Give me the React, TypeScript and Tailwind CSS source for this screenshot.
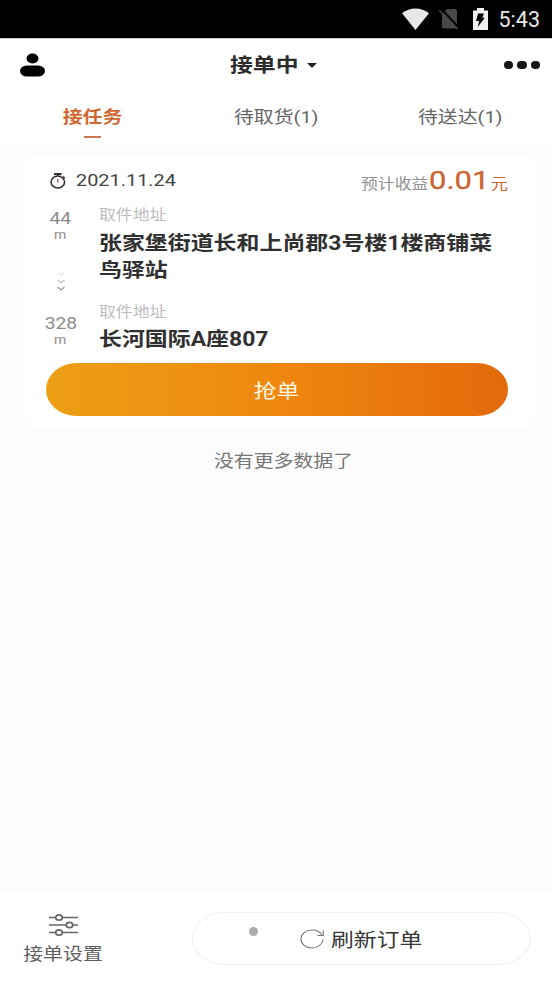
import clsx from "clsx";
import type { ReactNode } from "react";

const tabs = [
	{ label: "接任务", active: true },
	{ label: "待取货(1)", active: false },
	{ label: "待送达(1)", active: false }
];

// Wide text, stretched horizontally from its origin
function Wide({ className, children }: { className?: string, children: ReactNode }) {
	return (
		<span className={ clsx("inline-block whitespace-nowrap scale-x-[1.17]", className) }>
			{ children }
		</span>
	);
}

function StatusBar() {
	return (
		<div className="flex h-[38px] shrink-0 items-center justify-end bg-black pr-[12px] text-[#e8e8e8]">

			{/* Wifi */}
			<svg className="mr-[10px] h-[22px] w-[27px]" viewBox="0 0 27 22" fill="currentColor">
				<path d="M0 5.2C7.5-1.2 19.5-1.2 27 5.2L13.5 22z" />
			</svg>

			{/* No sim card */}
			<svg className="mr-[14px] h-[22px] w-5" viewBox="0 0 20 22">
				<path d="M8 1h8a2 2 0 0 1 2 2v16a1.500 1.500 0 0 1-1.500 1.500h-12A1.500 1.500 0 0 1 3 19V6z" fill="#484848" />
				<path d="M1.800.3l19 20.500" stroke="#000" strokeWidth="2" />
				<path d="M.3 2.200l18.500 19" stroke="#484848" strokeWidth="1.600" />
			</svg>

			{/* Battery */}
			<svg className="mr-[11px] h-[22px] w-[15px]" viewBox="0 0 15 22">
				<path d="M0 2.500h4V0h7v2.500h4V22H0z" fill="#f0f0f0" />
				<path d="M5 5.500h6L9.300 9.800h2.500L4.800 19l1.400-6H3z" fill="#000" />
			</svg>

			<span className="translate-y-[1px] font-[Roboto] text-[21.500px] leading-none">5:43</span>
		</div>
	);
}

function Header() {
	return (
		<header className="shrink-0 border-t border-[#c8c8c8] bg-white">
			<div className="grid h-[53px] grid-cols-3 items-center">

				<svg className="-mt-[2px] ml-5 h-6 w-[25px]" viewBox="0 0 25 24">
					<ellipse cx="12.500" cy="5.500" rx="6" ry="5" />
					<rect y="12.500" width="25" height="11" rx="7" ry="5.500" />
				</svg>

				<div className="flex items-center justify-center text-[#2b2b2b]">
					<Wide className="text-[19.5px] font-bold">接单中</Wide>
					<svg className="ml-[13px] h-[5px] w-[10px]" viewBox="0 0 10 5">
						<path d="M0 0h10L5 5z" fill="#222" />
					</svg>
				</div>

				<div className="-mt-[2px] mr-[12px] flex items-center justify-end gap-1">
					<i className="h-2 w-[9.300px] rounded-full bg-[#151515]" />
					<i className="h-2 w-[9.300px] rounded-full bg-[#151515]" />
					<i className="h-2 w-[9.300px] rounded-full bg-[#151515]" />
				</div>
			</div>

			<nav className="grid h-[52px] grid-cols-3">
				{ tabs.map(tab => (
					<div className="flex flex-col items-center pt-[13px]" key={ tab.label }>
						<Wide className={ clsx("text-[17px] leading-[25px]", tab.active ? "font-bold text-[#d0682f]" : "pl-px text-[#666]") }>
							{ tab.label }
						</Wide>
						{ tab.active && <div className="mt-[6px] h-[2px] w-[17px] bg-[#c97850]" /> }
					</div>
				)) }
			</nav>
		</header>
	);
}

function Distance({ value }: { value: string }) {
	return (
		<div className="flex flex-col items-center">
			<Wide className="text-[16.500px] leading-[18px] text-[#8c8c8c]">{ value }</Wide>
			<Wide className="text-[12px] leading-[15px] text-[#8c8c8c]">m</Wide>
		</div>
	);
}

function OrderCard() {
	return (
		<section className="ml-[22px] mt-[11px] h-[273px] w-[516px] rounded-[20px] bg-white px-6 pt-2 shadow-[0_0_5px_rgba(0,0,0,0.012)]">

			{/* Date and income */}
			<div className="flex h-9 items-center justify-between">
				<div className="-mt-px flex items-center">
					<svg className="ml-[4px] mr-[10px] h-4 w-4" viewBox="0 0 16 16" fill="none" stroke="#333" strokeWidth="1.500">
						<ellipse cx="7.800" cy="9" rx="6.800" ry="5.900" />
						<path d="M4 1h7.500" strokeWidth="2" />
						<path d="M7.800 1v2M13 3.500l1.800 1.700" />
						<path d="M7.800 6v3.500" stroke="#9b6a58" />
					</svg>
					<Wide className="origin-left text-[17px] leading-none text-[#444]">2021.11.24</Wide>
				</div>
				<div className="flex items-baseline pr-[14px]">
					<Wide className="mr-[10px] origin-left text-[14.4px] text-[#929292]">预计收益</Wide>
					<Wide className="mr-[10px] origin-left text-[26.500px] leading-none text-[#cb6332] [-webkit-text-stroke:0.3px]">0.01</Wide>
					<Wide className="-mr-[5px] origin-left text-[14.4px] text-[#cb6332]">元</Wide>
				</div>
			</div>

			{/* Route */}
			<div className="flex h-[164px]">
				<div className="flex w-[29px] flex-col items-center pt-[11px]">
					<Distance value="44" />
					<svg className="mb-[23px] mt-[28px] h-[21px] w-2 shrink-0" viewBox="0 0 8 21" fill="none" strokeWidth="1.200">
						<path d="M1 2l3 2 3-2" stroke="#e4e4e4" />
						<path d="M.5 9L4 12l3.500-3" stroke="#c4c4c4" />
						<path d="M.5 16L4 19l3.500-3" stroke="#999" />
					</svg>
					<Distance value="328" />
				</div>
				<div className="ml-6 flex flex-col items-start">
					<Wide className="mt-[7px] origin-left text-[14.4px] leading-[20px] text-[#bdbdbd]">取件地址</Wide>
					<Wide className="mt-[4px] origin-left text-[19.6px] font-bold leading-[27px] text-[#303030]">
						张家堡街道长和上尚郡3号楼1楼商铺菜<br />鸟驿站
					</Wide>
					<Wide className="mt-[19px] origin-left text-[14.4px] leading-[20px] text-[#bdbdbd]">取件地址</Wide>
					<Wide className="mt-[3px] origin-left text-[19.6px] font-bold leading-[27px] text-[#303030]">长河国际A座807</Wide>
				</div>
			</div>

			<button className="flex h-[53px] w-[462px] items-center justify-center rounded-[31px/26.500px] bg-linear-to-r from-[#ec9f14] via-[#ef870f] to-[#e3690b] pt-[4px] text-[19.5px] text-[#fff9e5]">
				<Wide>抢单</Wide>
			</button>
		</section>
	);
}

function Footer() {
	return (
		<footer className="flex h-[88px] shrink-0 bg-white shadow-[0_-1px_6px_rgba(0,0,0,0.02)]">
			<div className="flex w-[126px] flex-col items-center pt-[20px]">
				<svg className="h-6 w-[29px]" viewBox="0 0 29 24" fill="none" stroke="#666" strokeWidth="1.700">
					<path d="M0 4.500h7M13 4.500h16M0 12h17M24 12h5M0 19.500h7M13 19.500h16" />
					<ellipse cx="10" cy="4.500" rx="3.300" ry="2.700" />
					<ellipse cx="20.500" cy="12" rx="3.300" ry="2.700" />
					<ellipse cx="10" cy="19.500" rx="3.300" ry="2.700" />
				</svg>
				<Wide className="mt-[5px] text-[17px] leading-[25px] text-[#606060]">接单设置</Wide>
			</div>
			<button className="relative ml-[66px] mt-[19px] flex h-[53px] w-[339px] items-center rounded-[32px/26.500px] border border-[#f0f0f0] pl-[107px]">
				<i className="absolute left-[56px] top-[14px] size-[9px] rounded-full bg-[#aaa]" />
				<svg className="mr-[7px] h-5 w-6" viewBox="0 0 24 20" fill="none" stroke="#777" strokeWidth="1.100">
					<path d="M23 10.500C22.500 15.500 17.500 19 12 19 5.500 19 1 15 1 10S5.500 1 12 1c4.500 0 8 1.800 10 5" />
					<path d="M23.300 1.500v5h-6" />
				</svg>
				<Wide className="mt-[4px] origin-left text-[19.5px] text-[#383838]">刷新订单</Wide>
			</button>
		</footer>
	);
}

export default function App() {
	return (
		<div className="flex h-screen w-full flex-col overflow-hidden bg-[#fcfcfc] font-[Roboto,'Noto_Sans_CJK_SC',sans-serif]">
			<StatusBar />
			<Header />

			{/* Order list */}
			<main className="grow">
				<OrderCard />
				<p className="mt-[21px] pl-[14px] text-center text-[17px] leading-[25px] text-[#777]">
					<Wide>没有更多数据了</Wide>
				</p>
			</main>

			<Footer />
		</div>
	);
}
